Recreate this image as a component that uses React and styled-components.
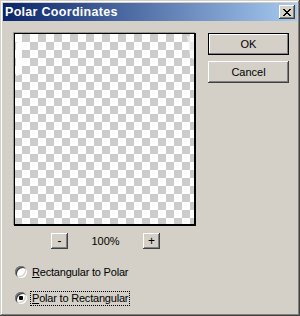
import styled, {createGlobalStyle} from "styled-components";

const GlobalStyle = createGlobalStyle`
  html, body {
    margin: 0;
    padding: 0;
    background: #d4d0c8;
  }
`

const face = "#d4d0c8"
const uiFont = `"Liberation Sans", Arial, sans-serif`

const bevel = `
  inset -1px -1px #404040,
  inset 1px 1px #ffffff,
  inset -2px -2px #808080,
  inset 2px 2px ${face}
`

const defaultBevel = `
  inset 0 0 0 1px #000000,
  inset -2px -2px #808080,
  inset 2px 2px #ffffff
`

const Window = styled.div`
  width: 300px;
  height: 316px;
  box-sizing: border-box;
  padding: 3px;
  background: ${face};
  box-shadow: inset -1px -1px #404040,
    inset 1px 1px ${face},
    inset -2px -2px #808080,
    inset 2px 2px #ffffff;
  display: flex;
  flex-direction: column;
  font-family: ${uiFont};
  font-size: 11px;
  color: #000;
`

const TitleBar = styled.div`
  height: 18px;
  display: flex;
  align-items: center;
  justify-content: space-between;
  padding: 0 2px 0 2px;
  background: linear-gradient(to right, #0a246a, #a6caf0);

  h1 {
    margin: 0;
    color: #fff;
    font-family: ${uiFont};
    font-weight: bold;
    font-size: 12.5px;
    letter-spacing: 0.3px;
  }
`

const CloseButton = styled.div`
  width: 16px;
  height: 14px;
  background: ${face};
  box-shadow: ${bevel};
  display: flex;
  align-items: center;
  justify-content: center;

  svg {
    display: block;
    margin: 0 0 0 -1px;
  }
`

const Body = styled.div`
  display: flex;
  padding: 12px 0 0 11px;
`

const LeftCol = styled.div`
  width: 182px;
  display: flex;
  flex-direction: column;
`

const Preview = styled.div`
  position: relative;
  width: 182px;
  height: 193px;
  box-sizing: border-box;
  border-style: solid;
  border-color: #000;
  border-width: 1px 2px 2px 1px;
  box-shadow: -1px -1px 0 #9a9890;
  background: repeating-conic-gradient(#cccccc 0% 25%, #ffffff 0% 50%) -1px 0 / 16px 16px;

  svg {
    position: absolute;
    left: 0;
    top: 0;
  }
`

const ZoomRow = styled.div`
  margin-top: 7px;
  display: flex;
  justify-content: center;
  align-items: center;
  padding-left: 1px;
`

const ZoomLabel = styled.span`
  width: 75px;
  text-align: center;
  font-size: 11px;
`

const SmallButton = styled.div`
  width: 17px;
  height: 16px;
  box-sizing: border-box;
  background: ${face};
  box-shadow: ${bevel};
  display: flex;
  align-items: center;
  justify-content: center;
  font-size: 12px;
  line-height: 1;
  padding-bottom: 1px;
`

const RadioGroup = styled.div`
  margin-top: 15px;
  display: flex;
  flex-direction: column;
  gap: 10px;
`

const RadioRow = styled.label`
  height: 16px;
  display: flex;
  align-items: center;
  padding-left: 1px;
`

const RadioDot = styled.span`
  position: relative;
  width: 12px;
  height: 12px;
  border-radius: 50%;
  background: #fff;
  box-shadow: inset 1px 1px #808080,
    inset -1px -1px #ffffff,
    inset 2px 2px #404040,
    inset -2px -2px ${face};
  margin-right: 3px;

  &::after {
    content: "";
    display: ${p => p.$checked ? "block" : "none"};
    position: absolute;
    left: 4px;
    top: 4px;
    width: 4px;
    height: 4px;
    border-radius: 1px;
    background: #000;
  }
`

const RadioText = styled.span`
  border: 1px dotted ${p => p.$focused ? "#000" : "transparent"};
  padding: 1px 1px 1px 1px;
  letter-spacing: -0.2px;
  line-height: 11px;

  u {
    text-decoration: underline;
    text-underline-offset: 1px;
  }
`

const RightCol = styled.div`
  margin-left: 12px;
  display: flex;
  flex-direction: column;
  gap: 6px;
`

const DialogButton = styled.div`
  width: 81px;
  height: 22px;
  box-sizing: border-box;
  background: ${face};
  box-shadow: ${p => p.$default ? defaultBevel : bevel};
  display: flex;
  align-items: center;
  justify-content: center;
  font-size: 11px;
`

const CloseGlyph = () => {
  const rows = [
    "XX....XX",
    ".XX..XX.",
    "..XXXX..",
    "...XX...",
    "..XXXX..",
    ".XX..XX.",
    "XX....XX",
  ]
  return (
    <svg width="8" height="7" viewBox="0 0 8 7" shapeRendering="crispEdges">
      {rows.map((r, y) => r.split("").map((c, x) => c === "X" &&
        <rect key={`${x}-${y}`} x={x} y={y} width="1" height="1" fill="#000"/>))}
    </svg>
  )
}

const Radio = ({checked, focused, children}) => (
  <RadioRow>
    <RadioDot $checked={checked}/>
    <RadioText $focused={focused}>{children}</RadioText>
  </RadioRow>
)

export default function App() {
  return (
    <>
      <GlobalStyle/>
      <Window>
        <TitleBar>
          <h1>Polar Coordinates</h1>
          <CloseButton><CloseGlyph/></CloseButton>
        </TitleBar>
        <Body>
          <LeftCol>
            <Preview>
              {/* leftover polar streaks on the transparent preview */}
              <svg width="180" height="190">
                <polygon points="1,9 5,6 7,8 7,40 1,42" fill="#ffffff"/>
                <polygon points="172,2 179,2 179,26 175,22" fill="#f4f4f4" opacity="0.7"/>
              </svg>
            </Preview>
            <ZoomRow>
              <SmallButton>-</SmallButton>
              <ZoomLabel>100%</ZoomLabel>
              <SmallButton>+</SmallButton>
            </ZoomRow>
            <RadioGroup>
              <Radio><u>R</u>ectangular to Polar</Radio>
              <Radio checked focused><u>P</u>olar to Rectangular</Radio>
            </RadioGroup>
          </LeftCol>
          <RightCol>
            <DialogButton $default>OK</DialogButton>
            <DialogButton>Cancel</DialogButton>
          </RightCol>
        </Body>
      </Window>
    </>
  )
}
